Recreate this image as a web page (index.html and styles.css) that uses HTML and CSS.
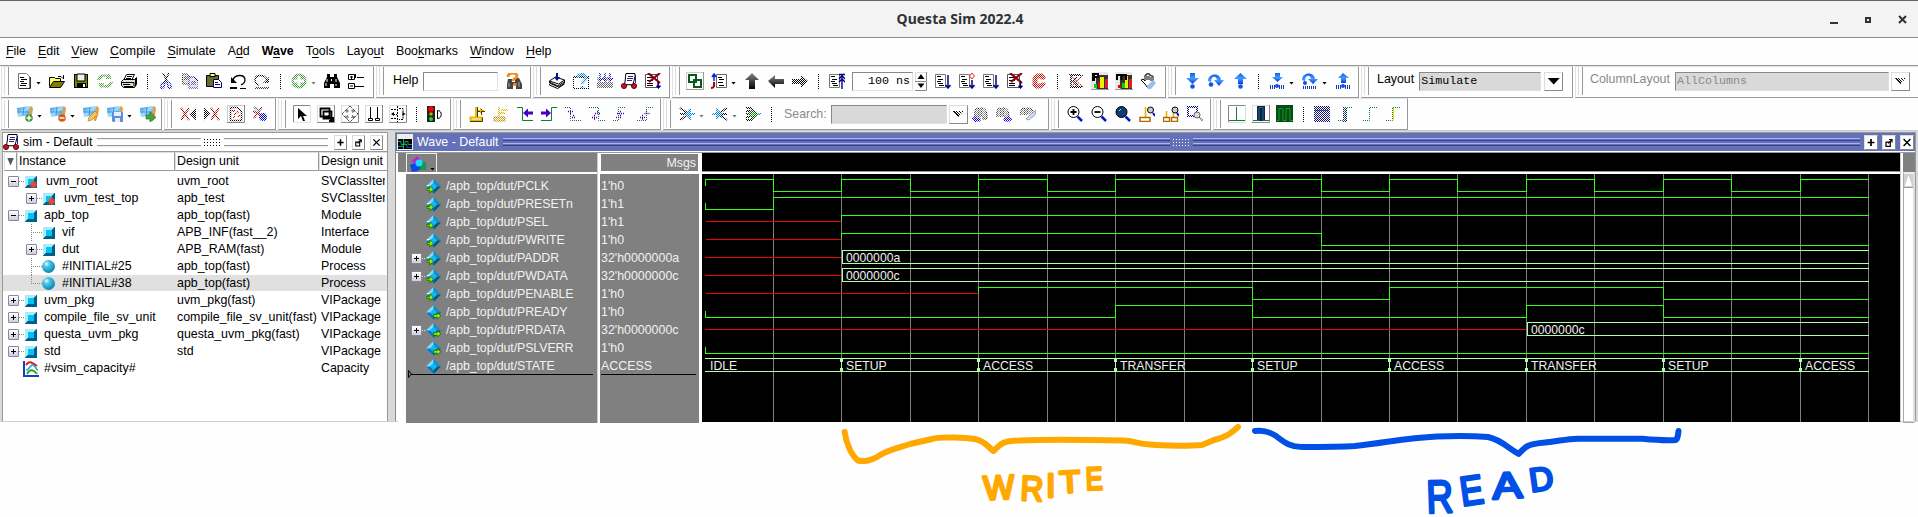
FILE: index.html
```html
<!DOCTYPE html>
<html lang="en">
<head>
<meta charset="utf-8">
<title>Questa Sim 2022.4</title>
<link rel="stylesheet" href="styles.css">
</head>
<body>
<svg class="defs" width="0" height="0" aria-hidden="true">
<defs>
<pattern id="dither" width="2" height="2" patternUnits="userSpaceOnUse"><path d="M0 0h1v1H0zM1 1h1v1H1z" fill="#fff"/></pattern>
<mask id="dm" maskUnits="userSpaceOnUse" x="-2" y="-2" width="24" height="24"><rect x="-2" y="-2" width="24" height="24" fill="url(#dither)"/></mask>
<linearGradient id="gDark" x2="0" y2="1"><stop stop-color="#888"/><stop offset="1" stop-color="#000"/></linearGradient>
<linearGradient id="gBlue" x2="0" y2="1"><stop stop-color="#1a5cf0"/><stop offset=".5" stop-color="#3c9cff"/><stop offset="1" stop-color="#0a3ad8"/></linearGradient>
<linearGradient id="gWp" x2="1" y2="1"><stop stop-color="#2a86d8"/><stop offset=".5" stop-color="#9fe0ff"/><stop offset="1" stop-color="#3a90e0"/></linearGradient>
<radialGradient id="gBall" cx=".35" cy=".3" r=".75"><stop stop-color="#e8fbff"/><stop offset=".3" stop-color="#4cc8e8"/><stop offset="1" stop-color="#0a7fa8"/></radialGradient>

<symbol id="new" viewBox="0 0 16 16"><path d="M2.500 .5h8l3 3v12h-11z" fill="#fff" stroke="#777"/><path d="M14.500 4v11.500H3" fill="none" stroke="#333"/><path d="M4 4.500h4M5 6.500h6M4 8.500h4M5 10.500h6M4 12.500h6" stroke="#000"/></symbol>
<symbol id="open" viewBox="0 0 16 16"><path d="M9 3.500h3l2 2M14.500 2v4" fill="none" stroke="#000"/><path d="M.5 13.500v-9h5l1 1h5v3" fill="#ffff60" stroke="#000"/><path d="M.5 14.500l4-6h11l-4 6z" fill="#808000" stroke="#000"/></symbol>
<symbol id="save" viewBox="0 0 16 16"><path d="M1 1h14v14H1z" fill="#000"/><path d="M2 2h12v12H2z" fill="#808000"/><path d="M4 1h8v7H4z" fill="#eee" stroke="#000"/><path d="M4 10h9v5H4z"/><path d="M10 11h2v3h-2z" fill="#fff"/></symbol>
<symbol id="reload" viewBox="0 0 16 16"><g fill="#4da838" mask="url(#dm)"><path d="M0 7C1 2 6 0 11 2l1-2 3 6H9l1-2C6 3 4 5 4 7zM16 9c-1 5-6 7-11 5l-1 2-3-6h6l-1 2c4 1 6-1 6-3z"/></g></symbol>
<symbol id="print" viewBox="0 0 16 16"><path d="M5.500 1.500h8l-3 6h-8z" fill="#fff" stroke="#000"/><path d="M6 3.500h5M5 5.500h5" stroke="#000"/><path d="M.5 8.500l2-2h11l2-2v7l-2 3h-11l-2-2z" fill="#ddd" stroke="#000"/><path d="M1 9.500h12v4M2 11.500h8M3 13.500h9M14.500 5v8" fill="none" stroke="#000"/><path d="M9 11h2v1H9z" fill="#dd0"/></symbol>
<symbol id="cut" viewBox="0 0 16 16"><g mask="url(#dm)" fill="none" stroke-width="1.600"><path d="M5 0l5 10M11 0L6 10" stroke="#000"/><path d="M7 9c-2 0-4 2-4 5s3 1 3-1zM9 9c2 0 4 2 4 5s-3 1-3-1z" stroke="#00c"/></g></symbol>
<symbol id="copy" viewBox="0 0 16 16"><g mask="url(#dm)"><path d="M0 1h6l2 3v7H1z" fill="#bbb" stroke="#000"/><path d="M7 4h5l4 4v7H7z" fill="#ccf" stroke="#008"/><path d="M2 4h4M2 6h4M9 9h5M9 11h5" stroke="#000"/></g></symbol>
<symbol id="paste" viewBox="0 0 16 16"><path d="M.5 2.500h12v11H.5z" fill="#6b6b30" stroke="#000"/><path d="M4 .5h5v3H4z" fill="#ff6" stroke="#000"/><path d="M7.500 6.500h5l3 3v5h-8z" fill="#fff" stroke="#006"/><path d="M9 9.500h3M9 11.500h5" stroke="#006"/></symbol>
<symbol id="undo" viewBox="0 0 16 16"><path d="M1 4v6h6z"/><path d="M3 7c2-6 12-6 12 0 0 3-2 4-4 5" fill="none" stroke="#000" stroke-width="1.300"/><path d="M0 14h7v2H0zM10 15h6v1h-6z"/></symbol>
<symbol id="redo" viewBox="0 0 16 16"><g mask="url(#dm)"><path d="M15 4v6H9z"/><path d="M13 7C11 1 1 1 1 7c0 3 2 4 4 5M1 15h14" fill="none" stroke="#000" stroke-width="1.400"/></g></symbol>
<symbol id="addc" viewBox="0 0 16 16"><g mask="url(#dm)"><circle cx="8" cy="8" r="7.500" fill="#3b9a2e"/><path d="M6.500 3h3v3.500H13v3H9.500V13h-3V9.500H3v-3h3.500z" fill="#fff"/></g></symbol>
<symbol id="find" viewBox="0 0 16 16"><path d="M3 1h3v3h4V1h3v3l3 6v5h-6v-4H6v4H0v-5l3-6z"/><path d="M3 6v3M2 10v3M12 6v3M12 11v2M7.500 6v2" stroke="#fff"/></symbol>
<symbol id="tree" viewBox="0 0 16 16"><path d="M.5 1.500h6v5h-6zM.5 10.500h6v5h-6zM9 4.500h7M7 13.500h9M7.500 1v4" fill="none" stroke="#000"/><path d="M2 4h3M3.500 3v3M2 13h3" stroke="#000"/></symbol>
<symbol id="hfind" viewBox="0 0 16 16"><path d="M2 6h4v3h3V5h4l3 6v5h-6v-4H7v4H1v-5z" fill="#444"/><path d="M2 4c0-5 9-5 9-1 0 3-4 2-4 5" fill="none" stroke="#f08c1e" stroke-width="2.800"/><circle cx="9" cy="11.500" r="1.800" fill="#f08c1e"/><path d="M3 10v4M13 9v5" stroke="#aaa"/></symbol>
<symbol id="compile" viewBox="0 0 16 16"><path d="M.5 8l6-4 9 3-6 4zM.5 8v2l9 4 6-4V7M.5 11v1l8 3.500 7-4.500" fill="#fff" stroke="#000"/><path d="M1 9.500l8 3.500 6-4" fill="none" stroke="#000"/><path d="M7 0h2v4h2L8 8 5 4h2z" fill="#00109a"/></symbol>
<symbol id="optq" viewBox="0 0 16 16"><g mask="url(#dm)"><path d="M0 4h16v12H0z" fill="none" stroke="#000" stroke-width="2"/><path d="M5 5c0-5 8-5 8 0 0 3-4 3-4 6M9 13v2" fill="none" stroke="#08e" stroke-width="2.800"/></g></symbol>
<symbol id="compall" viewBox="0 0 16 16"><g mask="url(#dm)"><path d="M0 9h16v6H0z" fill="#666"/><path d="M3 0v8M8 0v8M13 0v8M0 5l3 3 3-3 2 3 3-3 2 3 3-3" fill="none" stroke="#009" stroke-width="1.500"/></g></symbol>
<symbol id="sim" viewBox="0 0 16 16"><path d="M5 .5h9v3l-2 8H3c2-3 1-8 2-11z" fill="#fff" stroke="#000"/><path d="M7 3.500h5M6 5.500h6M6 7.500h5M14.500 2v8" stroke="#228"/><path d="M0 12h16" stroke="#777"/><circle cx="3" cy="13" r="2.500" fill="#d01030" stroke="#500"/><circle cx="13" cy="13" r="2.500" fill="#d01030" stroke="#500"/></symbol>
<symbol id="brk" viewBox="0 0 16 16"><path d="M.5 1.500h12v13H.5z" fill="#fff" stroke="#555"/><path d="M2 4.500h6M2 7.500h6M2 10.500h6M2 12.500h6" stroke="#000"/><path d="M3 0l12 10M15 0L4 9" stroke="#900010" stroke-width="2.200"/><path d="M13.500 9v4M11.500 13l2 2.500 2-2.500z" fill="#008" stroke="#008"/></symbol>
<symbol id="link" viewBox="0 0 18 18"><path d="M.5 .5h17v17H.5z" fill="#fff" stroke="#ccc"/><path d="M0 17.500h17.500V0" fill="none" stroke="#999"/><path d="M3 3h7v7H3zM8 8h7v7H8z" fill="none" stroke="#075a1a" stroke-width="2"/></symbol>
<symbol id="stack" viewBox="0 0 16 16"><path d="M5.500 1.500h10v13h-10z" fill="#fff" stroke="#666"/><path d="M7 4.500h4M8 6.500h5M7 9.500h5M8 12.500h5" stroke="#000"/><path d="M0 15c4 0 3-3 3-6" fill="none" stroke="#900" stroke-width="2"/><path d="M3 8V2M1 4l2-3 2 3" fill="none" stroke="#02e" stroke-width="1.500"/></symbol>
<symbol id="up" viewBox="0 0 16 16"><path d="M8 0l7 7h-4v9H5V7H1z" fill="url(#gDark)"/></symbol>
<symbol id="left" viewBox="0 0 16 16"><path d="M0 8l7-6v4h9v5H7v4z" fill="url(#gDark)"/></symbol>
<symbol id="right" viewBox="0 0 16 16"><path d="M16 8L9 2v4H0v5h9v4z" mask="url(#dm)"/></symbol>
<symbol id="doc" viewBox="0 0 16 16"><path d="M.5 1.500h10v13H.5z" fill="#fff" stroke="#777"/><path d="M2 3.500h4M3 6.500h5M2 8.500h4M3 10.500h5M4 12.500h5" stroke="#000"/></symbol>
<symbol id="restart" viewBox="0 0 16 16"><use href="#doc"/><path d="M10 1.500h6M13 2v14M10 6l3-3.500L16 6M10 9l3-3 3 3" stroke="#008" fill="none" stroke-width="1.400"/></symbol>
<symbol id="run" viewBox="0 0 16 16"><use href="#doc"/><path d="M13 2v13M10.500 12l2.500 3 2.500-3" stroke="#008" fill="none" stroke-width="1.500"/></symbol>
<symbol id="runc" viewBox="0 0 16 16"><use href="#doc"/><path d="M13 7v8M10.500 12l2.500 3 2.500-3" stroke="#008" fill="none" stroke-width="1.500"/><path d="M13 0l2.500 3L13 6l-2.500-3z" fill="#fff" stroke="#e22"/></symbol>
<symbol id="stop" viewBox="0 0 16 16"><path d="M5 1h7l2 3v2h-4V5H6v6h4v-1h4v2l-3 3H5l-3-3V4z" fill="#e01000" stroke="#e01000" mask="url(#dm)"/></symbol>
<symbol id="kx" viewBox="0 0 16 16"><g mask="url(#dm)"><path d="M3 2v12h11M3 2h10M9 4L5 8l5 5" fill="none" stroke="#000" stroke-width="1.800"/></g><path d="M1 1l14 13M15 2L3 14" stroke="#a00000" stroke-dasharray="2 1"/></symbol>
<symbol id="prof" viewBox="0 0 18 18"><path d="M0 0h17v17H0z" fill="#e8e8e8"/><path d="M5 16V3h12v14H6z" fill="#333"/><path d="M3 12h3v4H3z" fill="#0d0"/><path d="M7 10h3v6H7z" fill="#e00"/><path d="M9 5h4v11H9z" fill="#ee0"/><path d="M14 7h3v9h-3z" fill="#e02020"/><path d="M1 1h7v5H4v3H1z" fill="#000"/><path d="M4 3h2v1H4z" fill="#fff"/><path d="M0 17.500h18" stroke="#999"/></symbol>
<symbol id="mem" viewBox="0 0 18 18"><path d="M0 0h17v17H0z" fill="#e8e8e8"/><path d="M5 16V3h12v14H6z" fill="#333"/><path d="M3 13h3v3H3z" fill="#e00"/><path d="M7 11h3v5H7z" fill="#0d0"/><path d="M10 4h3v12h-3z" fill="#ee0"/><path d="M14 7h3v9h-3z" fill="#e02020"/><path d="M2 8V3h9v5M6.500 3v5" fill="none" stroke="#000" stroke-width="2"/><path d="M0 17.500h18" stroke="#999"/></symbol>
<symbol id="hand" viewBox="0 0 16 16"><path d="M5 11L1 7l2-1 2 2V2h2V0h2v2h2v1h2v8l-3 3H7z" fill="#fff" stroke="#000"/><path d="M7 3v4M9 3v4M11 4v4" stroke="#000"/><path d="M7 13l6-6 3 3-5 6H8z" fill="#9bbcf0"/></symbol>
<symbol id="sinto" viewBox="0 0 16 16"><path d="M6 0h5v5h4l-6.500 6L2 5h4z" fill="url(#gBlue)"/><circle cx="8.500" cy="13.500" r="2.300" fill="#1450e8"/></symbol>
<symbol id="sover" viewBox="0 0 16 16"><path d="M0 8C0 0 12-1 13 7h3l-5 6-5-6h3C8 2 3 3 3 9z" fill="url(#gBlue)"/><circle cx="3" cy="11.500" r="2.300" fill="#1450e8"/></symbol>
<symbol id="sout" viewBox="0 0 16 16"><path d="M8.500 0L15 6h-4v5H6V6H2z" fill="url(#gBlue)"/><circle cx="8.500" cy="13.500" r="2.300" fill="#1450e8"/></symbol>
<symbol id="ticks" viewBox="0 0 16 16"><path d="M1.500 12v4M3.500 12v4M5.500 12v4M10.500 12v4M12.500 12v4M14.500 12v4" stroke="#1438c0"/></symbol>
<symbol id="sinto2" viewBox="0 0 16 16"><path d="M6 0h5v4h3l-5.500 5L3 4h3z" fill="url(#gBlue)"/><circle cx="8" cy="13" r="2" fill="#1450e8"/><use href="#ticks"/></symbol>
<symbol id="sover2" viewBox="0 0 16 16"><path d="M0 7C0-1 12-2 13 6h3l-5 5-5-5h3C8 1 3 2 3 8z" fill="url(#gBlue)"/><circle cx="3" cy="10" r="2" fill="#1450e8"/><path d="M1.500 13v3M3.500 13v3M5.500 13v3M7.500 13v3M9.500 13v3M11.500 13v3M13.500 13v3" stroke="#1438c0"/></symbol>
<symbol id="sout2" viewBox="0 0 16 16"><path d="M8 0l6 5h-3v5H6V5H3z" fill="url(#gBlue)"/><circle cx="8" cy="13" r="2" fill="#1450e8"/><use href="#ticks"/></symbol>

<symbol id="flag" viewBox="0 0 16 16"><path d="M12 1c2-2 4 0 4 2l-1 6-2 6h-2z" fill="#d9a050"/><path d="M0 2l7-1 5-1 1 1-1 8-5 1-6 1z" fill="url(#gWp)"/><path d="M7 1L6 9M0 6h12" stroke="#2878c8" stroke-width=".7"/></symbol>
<symbol id="fadd" viewBox="0 0 16 16"><use href="#flag"/><circle cx="12" cy="12" r="3.800" fill="#3d9a35"/><path d="M12 9.500v5M9.500 12h5" stroke="#fff" stroke-width="1.500"/></symbol>
<symbol id="fdel" viewBox="0 0 16 16"><use href="#flag"/><circle cx="12" cy="12" r="3.800" fill="#e05818"/><path d="M9.500 12h5" stroke="#fff" stroke-width="1.500"/></symbol>
<symbol id="fedit" viewBox="0 0 16 16"><use href="#flag"/><path d="M5 15l1-4 6-6 3 3-6 6z" fill="#f5c25c" stroke="#c87820" stroke-width=".7"/></symbol>
<symbol id="fsave" viewBox="0 0 16 16"><use href="#flag"/><path d="M5 6h11v10H6l-1-1z" fill="#5e8ed8"/><path d="M7 6h7v4H7zM8 12h5v4H8z" fill="#e8f0ff"/></symbol>
<symbol id="fgo" viewBox="0 0 16 16"><use href="#flag"/><path d="M6 9h4V6l6 5.500L10 16v-3H6z" fill="#4aa33c" stroke="#2a7a20" stroke-width=".7"/></symbol>
<symbol id="xprev" viewBox="0 0 16 16"><g mask="url(#dm)" fill="none" stroke-width="2"><path d="M1 2l8 12M9 2L1 14" stroke="#a00"/><path d="M15 4l-4 4 4 4z" stroke="#000" fill="#000"/></g></symbol>
<symbol id="xnext" viewBox="0 0 16 16"><g mask="url(#dm)" fill="none" stroke-width="2"><path d="M7 2l8 12M15 2L7 14" stroke="#a00"/><path d="M1 4l4 4-4 4z" stroke="#000" fill="#000"/></g></symbol>
<symbol id="xbox" viewBox="0 0 18 18"><path d="M.5 17.500V.5h17" fill="none" stroke="#ccc"/><path d="M0 17.500h17.500V0" fill="none" stroke="#888"/><g mask="url(#dm)"><path d="M3.500 2.500h7l4 4v9h-11z" fill="none" stroke="#000" stroke-width="1.500"/><path d="M5 6h3M7 9h2M10 6l1 2M6 12h2M11 11h2" stroke="#c00" stroke-width="2"/></g></symbol>
<symbol id="xslash" viewBox="0 0 16 16"><g mask="url(#dm)"><path d="M1 5l10 5M10 1L2 12" stroke="#a00" stroke-width="2"/><path d="M2 1l5 4" stroke="#088" stroke-width="2"/><circle cx="11" cy="11" r="4" fill="#00c"/></g></symbol>
<symbol id="btn" viewBox="0 0 18 18"><path d="M.5 17V.5h17" fill="none" stroke="#ddd"/><path d="M0 17.500h17.500V0" fill="none" stroke="#888"/></symbol>
<symbol id="ptr" viewBox="0 0 18 18"><path d="M.5 17V.5h17" fill="none" stroke="#888"/><path d="M0 17.500h17.500V0" fill="none" stroke="#e4e4e4"/><path d="M5 3v11l3-3 2 5h2l-2-5h4z"/></symbol>
<symbol id="zoomm" viewBox="0 0 18 18"><use href="#btn"/><path d="M3.500 3.500h9v8h-9zM6.500 6.500h8v7h-8z" fill="none" stroke="#000" stroke-width="1.800"/><path d="M11 11l5 5m0-4v4h-4" stroke="#000" stroke-width="2" fill="none"/></symbol>
<symbol id="pan" viewBox="0 0 18 18"><use href="#btn"/><path d="M9 1l4 4h-2v2h2V5l4 4-4 4v-2h-2v2h2l-4 4-4-4h2v-2H5v2L1 9l4-4v2h2V5H5z" fill="none" stroke="#000" stroke-dasharray="1 1"/></symbol>
<symbol id="two" viewBox="0 0 18 18"><use href="#btn"/><path d="M5.500 2v11M12.500 2v11" stroke="#000"/><path d="M3.500 13.500h4v2h-4zM10.500 13.500h4v2h-4z" fill="#fff" stroke="#000"/></symbol>
<symbol id="edit" viewBox="0 0 18 18"><use href="#btn"/><path d="M8.500 1v16" stroke="#000" stroke-dasharray="2 1"/><path d="M2 4.500h5M4 9.500h4M2 13.500h5M10 3.500h4v11h-4" fill="none" stroke="#000" stroke-dasharray="2 1"/><path d="M2 9l3-2v4zM16.500 9l-3-2v4z"/></symbol>
<symbol id="light" viewBox="0 0 16 16"><path d="M0 0h8v16H0z" fill="#222"/><circle cx="4" cy="3" r="2.700" fill="#f00"/><circle cx="4" cy="8" r="1.800" fill="#bba800"/><circle cx="4" cy="13" r="2" fill="#1d4"/><path d="M10.500 4.500c5 0 5 8 0 8z" fill="none" stroke="#000"/></symbol>
<symbol id="curadd" viewBox="0 0 16 16"><path d="M7 1v10M1.500 11.500h11v3h-11z" fill="none" stroke="#e8b800" stroke-width="2"/><path d="M8.500 1v10M1 15.500h12.500v-4M9 5.500h7M12.500 3v6" fill="none" stroke="#4a3800"/><path d="M9 4.500h6M11.500 2v5" stroke="#e8b800"/></symbol>
<symbol id="curdel" viewBox="0 0 16 16"><g mask="url(#dm)"><path d="M6 1v9M8 4h7M6 7h6" stroke="#e8b800" stroke-width="2"/><path d="M1 11h11v4H1z" fill="#e8b800" stroke="#8a6a00"/></g></symbol>
<symbol id="tprev" viewBox="0 0 16 16"><path d="M0 1.500h5.500v13H16" fill="none" stroke="#0a8035"/><path d="M6 7l5-4.500v3h5v3h-5v3z" fill="#4600c8"/></symbol>
<symbol id="tnext" viewBox="0 0 16 16"><path d="M0 14.500h10.500v-13H16" fill="none" stroke="#0a8035"/><path d="M10 7L5 2.500v3H0v3h5v3z" fill="#4600c8"/></symbol>
<symbol id="tfall" viewBox="0 0 16 16"><path d="M0 1.500h5.500v13H16" fill="none" stroke="#0a8035" stroke-dasharray="1 1"/><path d="M3 5.500h5M5 7.500h2M8 9.500h2M7 11.500h4" fill="none" stroke="#4600c8" stroke-width="1.500" stroke-dasharray="1 1"/></symbol>
<symbol id="trise" viewBox="0 0 16 16"><path d="M0 14.500h9.500v-13H16" fill="none" stroke="#0a8035" stroke-dasharray="1 1"/><path d="M3 11.500h6M5 9.500h2M5 13h2M7.500 7.500h5M9 5.500h2" fill="none" stroke="#4600c8" stroke-width="1.500" stroke-dasharray="1 1"/></symbol>
<symbol id="trise2" viewBox="0 0 16 16"><path d="M0 14.500h5.500v-13H12" fill="none" stroke="#0a8035" stroke-dasharray="1 1"/><path d="M4 7.500h7M7 5.500h2M7 9.500h2M3 11.500h5" fill="none" stroke="#4600c8" stroke-width="1.500" stroke-dasharray="1 1"/></symbol>
<symbol id="tfall2" viewBox="0 0 16 16"><path d="M0 1.500h9.500v13H16" fill="none" stroke="#0a8035" stroke-dasharray="1 1"/><path d="M6 7.500h6M8 5.500h2M3 11.500h6M5 9.500h2M5 13h2" fill="none" stroke="#4600c8" stroke-width="1.500" stroke-dasharray="1 1"/></symbol>
<symbol id="c1" viewBox="0 0 16 16"><g mask="url(#dm)" fill="none" stroke-width="2"><path d="M1 2l6 4v4l-6 4M1 8h5" stroke="#000"/><path d="M7 8l4-4v8zM10 8h6" stroke="#08e" fill="#08e"/></g></symbol>
<symbol id="c2" viewBox="0 0 16 16"><g mask="url(#dm)" fill="none" stroke-width="2"><path d="M15 2L9 6v4l6 4M15 8h-5" stroke="#000"/><path d="M9 8L5 4v8zM6 8H0" stroke="#08e" fill="#08e"/></g></symbol>
<symbol id="c3" viewBox="0 0 16 16"><g mask="url(#dm)" fill="none" stroke-width="2"><path d="M1 2h5l5 6-5 6H1M1 5h4M1 11h4M1 8h4" stroke="#000"/><path d="M8 4l4 4-4 4-4-4z" fill="#0a0" stroke="#050"/><path d="M13 8h3" stroke="#08e"/></g></symbol>
<symbol id="sprev" viewBox="0 0 16 16"><g mask="url(#dm)"><path d="M3 11C2 4 4 2 7 2v9M9 11V2c4 0 6 2 6 11h-4v-3" fill="#999" stroke="#000"/><path d="M0 13l4-3v2h4v3H4v1z" fill="#00e" stroke="#00e"/></g></symbol>
<symbol id="snext" viewBox="0 0 16 16"><g mask="url(#dm)"><path d="M1 11C0 4 2 2 5 2v9M7 11V2c4 0 6 2 6 11H9v-3" fill="#999" stroke="#000"/><path d="M16 13l-4-3v2H8v3h4v1z" fill="#00e" stroke="#00e"/></g></symbol>
<symbol id="sopt" viewBox="0 0 16 16"><g mask="url(#dm)"><path d="M1 9C0 4 2 2 5 2v7M7 9V2c4 0 6 2 6 5" fill="#999" stroke="#000"/></g><path d="M6 13l6-6 4-3-1 5-6 5z" fill="#cfdcf0" stroke="#889" stroke-width=".7"/></symbol>
<symbol id="zin" viewBox="0 0 16 16"><circle cx="6.500" cy="6" r="5.500" fill="#fff" stroke="#000"/><path d="M6.500 3v6M3.500 6h6" stroke="#000" stroke-width="1.800"/><path d="M10.500 10.500l4.500 4.500" stroke="#0018c0" stroke-width="2.500"/></symbol>
<symbol id="zout" viewBox="0 0 16 16"><circle cx="6.500" cy="6" r="5.500" fill="#fff" stroke="#000"/><path d="M3.500 6h6" stroke="#000" stroke-width="1.800"/><path d="M10.500 10.500l4.500 4.500" stroke="#0018c0" stroke-width="2.500"/></symbol>
<symbol id="zfull" viewBox="0 0 16 16"><circle cx="6.500" cy="6" r="5.500" fill="#0c3c70" stroke="#000"/><path d="M4 5l2-2" stroke="#acf"/><path d="M10.500 10.500l4.500 4.500" stroke="#0018c0" stroke-width="2.500"/></symbol>
<symbol id="zcur" viewBox="0 0 16 16"><path d="M6.500 1v10" stroke="#e8b400" stroke-width="1.600"/><path d="M1 11.500h10v4H1z" fill="#fff" stroke="#b06a00" stroke-width="1.500"/><circle cx="11.500" cy="4" r="3" fill="#ccc" stroke="#000"/><path d="M14 7l2 3" stroke="#00c" stroke-width="2"/></symbol>
<symbol id="ztwo" viewBox="0 0 16 16"><path d="M3.500 5v6M10.500 1v10" stroke="#e8b400" stroke-width="1.600"/><path d="M.5 11.500h6v4h-6zM8.500 11.500h6v4h-6z" fill="#fff" stroke="#b06a00" stroke-width="1.400"/><circle cx="12" cy="4" r="3" fill="#ccc" stroke="#000"/><path d="M14 7l2 3" stroke="#00c" stroke-width="2"/></symbol>
<symbol id="zsel" viewBox="0 0 16 16"><g mask="url(#dm)"><path d="M1 1h9v9H1z" fill="none" stroke="#009" stroke-width="2"/></g><circle cx="10" cy="9" r="3" fill="#ddd" stroke="#667"/><path d="M12 11l4 4" stroke="#556" stroke-width="2" stroke-dasharray="1 1"/></symbol>
<symbol id="w1" viewBox="0 0 18 18"><path d="M.5 17V.5h17" fill="none" stroke="#888"/><path d="M0 17.500h17.500V0" fill="none" stroke="#ddd"/><path d="M1 15.500h16M8.500 2v14" stroke="#0a8035"/></symbol>
<symbol id="w2" viewBox="0 0 18 18"><use href="#btn"/><path d="M5 1h8v15H5z" fill="#181868"/><path d="M1 15.500h6v-13h4v13h6" fill="none" stroke="#0a8035"/></symbol>
<symbol id="w3" viewBox="0 0 18 18"><path d="M0 0h17v17H0z" fill="#044c10"/><path d="M1 15.500h2v-12h4v12h3v-12h4v12h3" fill="none" stroke="#129a30"/></symbol>
<symbol id="w4" viewBox="0 0 16 16"><path d="M0 0h16v16H0z" fill="#117" mask="url(#dm)"/><path d="M1 4.500h14" stroke="#586" stroke-dasharray="1 1"/></symbol>
<symbol id="w5" viewBox="0 0 16 16"><path d="M5 1h4v15H5z" fill="#117" mask="url(#dm)"/><path d="M0 14.500h6.500v-13H15" fill="none" stroke="#0a8035" stroke-dasharray="1 1"/></symbol>
<symbol id="w6" viewBox="0 0 16 16"><path d="M1 14.500h6.500v-13H15" fill="none" stroke="#0a8035" stroke-dasharray="1 1"/></symbol>
<symbol id="w7" viewBox="0 0 16 16"><path d="M7.500 2v12" stroke="#dd0"/><path d="M0 14.500h6.500v-13H15" fill="none" stroke="#0a8035" stroke-dasharray="1 1"/></symbol>

<symbol id="cube" viewBox="0 0 12 12"><path d="M0 0h12L9 3H3v6l-3 3z" fill="#a8ecfc"/><path d="M12 0v12H0l3-3h6V3z" fill="#005f88"/><path d="M12 0L0 12" stroke="#033" stroke-width=".5"/><path d="M3 3h6v6H3z" fill="#00c4f4"/></symbol>
<symbol id="cubex" viewBox="0 0 12 12"><use href="#cube"/><path d="M8.500 4.500v7.500M4.500 8.500H12M6 6l5 5M11 6l-5 5" stroke="#f04830" stroke-width="1.500"/></symbol>
<symbol id="ball" viewBox="0 0 13 13"><circle cx="6.500" cy="6.500" r="6.500" fill="url(#gBall)"/></symbol>
<symbol id="cap" viewBox="0 0 16 16"><path d="M0 0h2v14h14v2H0z" fill="#1540c0"/><path d="M3 4c3-5 7-2 11 1" fill="none" stroke="#e81818" stroke-width="2"/><path d="M3 9c4 0 4-6 7-5s3 5 5 5" fill="none" stroke="#18a8e0" stroke-width="1.500"/><path d="M4 13c3-6 7-4 10 0" fill="none" stroke="#2aa820" stroke-width="2"/></symbol>
<symbol id="dia" viewBox="0 0 16 16"><path d="M8 0v16L0 8z" fill="#7fdcf8"/><path d="M8 0l8 8H8z" fill="#0d8fd0"/><path d="M0 8h8v8z" fill="#0878c0"/><path d="M16 8l-8 8V8z" fill="#00587c"/><path d="M8 4l4 4-4 4-4-4z" fill="#12b6f6"/></symbol>
<symbol id="din" viewBox="0 0 16 16"><use href="#dia"/><path d="M1 10h3V7l4 4-4 4v-3H1z" fill="#8cf000" stroke="#1f6a00" stroke-width=".9"/><path d="M1 7h3" stroke="#fff"/></symbol>
<symbol id="dout" viewBox="0 0 16 16"><use href="#dia"/><path d="M8 10h4V8l4 3.500-4 3.500v-2H8z" fill="#8cf000" stroke="#1f6a00" stroke-width=".9"/></symbol>
<symbol id="wave" viewBox="0 0 16 16"><path d="M0 0h16v16H0z" fill="#eee"/><path d="M1 5h14v10H1z" fill="#000"/><path d="M1 7.500h3v3h4v-3h3v3h4M1 12.500h5v-2h4v2" fill="none" stroke="#19a040"/><path d="M6.500 5v10" stroke="#0aa"/><path d="M9 13.500h6" stroke="#22f"/></symbol>
<symbol id="shapes" viewBox="0 0 16 16"><path d="M1 6l6-6 4 5-5 2z" fill="#c81cd0"/><path d="M9 6h7v8H9z" fill="#159a48"/><path d="M0 9l7-3 4 5-3 4-6 1z" fill="#0848e8"/><circle cx="9" cy="7" r="3.500" fill="#18dcff"/></symbol>
<symbol id="bplus" viewBox="0 0 14 14"><path d="M7 3v8M3 7h8" stroke="#000" stroke-width="2"/></symbol>
<symbol id="bout" viewBox="0 0 14 14"><path d="M3.500 6.500h5v5h-5zM6 8l4.500-4.500M7 3.500h3.500V7" fill="none" stroke="#000" stroke-width="1.400"/></symbol>
<symbol id="bx" viewBox="0 0 14 14"><path d="M3 3l8 8M11 3l-8 8" stroke="#000" stroke-width="1.700"/></symbol>
</defs>
</svg>

<header class="titlebar">
  <h1>Questa Sim 2022.4</h1>
  <svg class="winbtns" viewBox="0 0 78 12"><path d="M0 9h8v2H0z" fill="#2e3436"/><path d="M36 5h4v4h-4z" fill="none" stroke="#2e3436" stroke-width="2"/><path d="M69 3l7 7M76 3l-7 7" stroke="#2e3436" stroke-width="2"/></svg>
</header>
<nav class="menu"><span><u>F</u>ile</span><span><u>E</u>dit</span><span><u>V</u>iew</span><span><u>C</u>ompile</span><span><u>S</u>imulate</span><span>A<u>d</u>d</span><b>W<u>a</u>ve</b><span>T<u>o</u>ols</span><span>Layo<u>u</u>t</span><span>Boo<u>k</u>marks</span><span><u>W</u>indow</span><span><u>H</u>elp</span></nav>

<div class="toolrow first">
  <div class="group g-std">
    <svg class="ic"><use href="#new"/></svg><i class="dd"></i><svg class="ic"><use href="#open"/></svg><svg class="ic"><use href="#save"/></svg><svg class="ic"><use href="#reload"/></svg><svg class="ic"><use href="#print"/></svg><i class="sep"></i><svg class="ic"><use href="#cut"/></svg><svg class="ic"><use href="#copy"/></svg><svg class="ic"><use href="#paste"/></svg><svg class="ic"><use href="#undo"/></svg><svg class="ic"><use href="#redo"/></svg><i class="sep"></i><svg class="ic"><use href="#addc"/></svg><i class="dd off"></i><svg class="ic"><use href="#find"/></svg><svg class="ic"><use href="#tree"/></svg>
  </div>
  <div class="group g-help"><label>Help</label><span class="field"></span><svg class="ic"><use href="#hfind"/></svg></div>
  <div class="group g-comp"><svg class="ic"><use href="#compile"/></svg><svg class="ic"><use href="#optq"/></svg><svg class="ic"><use href="#compall"/></svg><svg class="ic"><use href="#sim"/></svg><svg class="ic"><use href="#brk"/></svg></div>
  <div class="group g-sim">
    <svg class="ic b"><use href="#link"/></svg><svg class="ic"><use href="#stack"/></svg><i class="dd"></i><svg class="ic"><use href="#up"/></svg><svg class="ic"><use href="#left"/></svg><svg class="ic"><use href="#right"/></svg><i class="sep"></i><svg class="ic"><use href="#restart"/></svg><span class="field time">100 ns</span><svg class="spin" viewBox="0 0 12 19"><path d="M.5 9V.5h11" fill="none" stroke="#ddd"/><path d="M0 9.500h11.500V0M0 18.500h11.500V10" fill="none" stroke="#888"/><path d="M6 2l3.500 5h-7zM6 16l3.500-4.500h-7z"/></svg><svg class="ic"><use href="#run"/></svg><svg class="ic"><use href="#runc"/></svg><svg class="ic"><use href="#run"/></svg><svg class="ic"><use href="#brk"/></svg><svg class="ic"><use href="#stop"/></svg><i class="sep"></i><svg class="ic"><use href="#kx"/></svg><svg class="ic b"><use href="#prof"/></svg><svg class="ic b"><use href="#mem"/></svg><svg class="ic"><use href="#hand"/></svg>
  </div>
  <div class="group g-step"><svg class="ic"><use href="#sinto"/></svg><svg class="ic"><use href="#sover"/></svg><svg class="ic"><use href="#sout"/></svg><i class="sep"></i><svg class="ic"><use href="#sinto2"/></svg><i class="dd"></i><svg class="ic"><use href="#sover2"/></svg><i class="dd"></i><svg class="ic"><use href="#sout2"/></svg></div>
  <div class="group g-layout"><label>Layout</label><span class="field combo">Simulate</span><span class="arrow"><i></i></span></div>
  <div class="group g-cols"><label>ColumnLayout</label><span class="field combo">AllColumns</span><span class="arrow off"><i></i></span></div>
</div>
<div class="toolrow">
  <div class="group h-flag"><svg class="ic"><use href="#fadd"/></svg><i class="dd"></i><svg class="ic"><use href="#fdel"/></svg><i class="dd"></i><svg class="ic"><use href="#fedit"/></svg><svg class="ic"><use href="#fsave"/></svg><i class="dd"></i><svg class="ic"><use href="#fgo"/></svg></div>
  <div class="group h-x"><svg class="ic"><use href="#xprev"/></svg><svg class="ic"><use href="#xnext"/></svg><svg class="ic b"><use href="#xbox"/></svg><svg class="ic"><use href="#xslash"/></svg></div>
  <div class="group h-mode"><svg class="ic b"><use href="#ptr"/></svg><svg class="ic b"><use href="#zoomm"/></svg><svg class="ic b"><use href="#pan"/></svg><svg class="ic b"><use href="#two"/></svg><svg class="ic b"><use href="#edit"/></svg><i class="sep"></i><svg class="ic"><use href="#light"/></svg></div>
  <div class="group h-cur"><svg class="ic"><use href="#curadd"/></svg><svg class="ic"><use href="#curdel"/></svg><svg class="ic"><use href="#tprev"/></svg><svg class="ic"><use href="#tnext"/></svg><svg class="ic"><use href="#tfall"/></svg><svg class="ic"><use href="#tfall2"/></svg><svg class="ic"><use href="#trise2"/></svg><svg class="ic"><use href="#trise"/></svg></div>
  <div class="group h-search"><svg class="ic"><use href="#c1"/></svg><i class="dd off"></i><svg class="ic"><use href="#c2"/></svg><i class="dd off"></i><svg class="ic"><use href="#c3"/></svg><i class="sep"></i><label>Search:</label><span class="field combo"></span><span class="arrow off"><i></i></span><svg class="ic"><use href="#sprev"/></svg><svg class="ic"><use href="#snext"/></svg><svg class="ic"><use href="#sopt"/></svg></div>
  <div class="group h-zoom"><svg class="ic"><use href="#zin"/></svg><svg class="ic"><use href="#zout"/></svg><svg class="ic"><use href="#zfull"/></svg><svg class="ic"><use href="#zcur"/></svg><svg class="ic"><use href="#ztwo"/></svg><svg class="ic"><use href="#zsel"/></svg></div>
  <div class="group h-wave"><svg class="ic b"><use href="#w1"/></svg><svg class="ic b"><use href="#w2"/></svg><svg class="ic b"><use href="#w3"/></svg><i class="sep"></i><svg class="ic"><use href="#w4"/></svg><svg class="ic"><use href="#w5"/></svg><svg class="ic"><use href="#w6"/></svg><svg class="ic"><use href="#w7"/></svg></div>
</div>

<main class="work">
  <section class="sim">
    <div class="ptitle"><svg class="pic"><use href="#sim"/></svg><span class="pname">sim - Default</span><i class="groove"></i><i class="dots"></i><i class="groove"></i><svg class="pb"><use href="#bplus"/></svg><svg class="pb"><use href="#bout"/></svg><svg class="pb"><use href="#bx"/></svg></div>
    <div class="cols"><span class="sort"><i></i></span><span>Instance</span><span>Design unit</span><span>Design unit</span></div>
    <div class="tree">
      <div class="row"><div class="inst"><i class="ex minus"></i><i class="ln"></i><svg class="ti"><use href="#cubex"/></svg><span class="far">uvm_root</span></div><span>uvm_root</span><span>SVClassItem</span></div>
      <div class="row kid"><div class="inst"><i class="ex"></i><i class="ln"></i><svg class="ti"><use href="#cubex"/></svg><span class="far">uvm_test_top</span></div><span>apb_test</span><span>SVClassItem</span></div>
      <div class="row"><div class="inst"><i class="ex minus"></i><i class="ln"></i><svg class="ti"><use href="#cube"/></svg><span>apb_top</span></div><span>apb_top(fast)</span><span>Module</span></div>
      <div class="row leaf"><div class="inst"><i class="ln"></i><svg class="ti"><use href="#cube"/></svg><span>vif</span></div><span>APB_INF(fast__2)</span><span>Interface</span></div>
      <div class="row kid"><div class="inst"><i class="ex"></i><i class="ln"></i><svg class="ti"><use href="#cube"/></svg><span>dut</span></div><span>APB_RAM(fast)</span><span>Module</span></div>
      <div class="row leaf"><div class="inst"><i class="ln"></i><svg class="ti ball"><use href="#ball"/></svg><span>#INITIAL#25</span></div><span>apb_top(fast)</span><span>Process</span></div>
      <div class="row leaf last sel"><div class="inst"><i class="ln"></i><svg class="ti ball"><use href="#ball"/></svg><span>#INITIAL#38</span></div><span>apb_top(fast)</span><span>Process</span></div>
      <div class="row"><div class="inst"><i class="ex"></i><i class="ln"></i><svg class="ti"><use href="#cube"/></svg><span>uvm_pkg</span></div><span>uvm_pkg(fast)</span><span>VIPackage</span></div>
      <div class="row"><div class="inst"><i class="ex"></i><i class="ln"></i><svg class="ti"><use href="#cube"/></svg><span>compile_file_sv_unit</span></div><span>compile_file_sv_unit(fast)</span><span>VIPackage</span></div>
      <div class="row"><div class="inst"><i class="ex"></i><i class="ln"></i><svg class="ti"><use href="#cube"/></svg><span>questa_uvm_pkg</span></div><span>questa_uvm_pkg(fast)</span><span>VIPackage</span></div>
      <div class="row"><div class="inst"><i class="ex"></i><i class="ln"></i><svg class="ti"><use href="#cube"/></svg><span>std</span></div><span>std</span><span>VIPackage</span></div>
      <div class="row"><div class="inst capa"><svg class="pic"><use href="#cap"/></svg><span>#vsim_capacity#</span></div><span></span><span>Capacity</span></div>
    </div>
  </section>
  <div class="sash"></div>
  <section class="wavewin">
    <div class="ptitle"><svg class="pic"><use href="#wave"/></svg><span class="pname">Wave - Default</span><i class="groove"></i><i class="dots"></i><i class="groove"></i><svg class="pb"><use href="#bplus"/></svg><svg class="pb"><use href="#bout"/></svg><svg class="pb"><use href="#bx"/></svg></div>
    <div class="panes">
      <div class="names">
        <div class="nhead"><span class="shp"><svg class="pic"><use href="#shapes"/></svg><i class="dd"></i></span></div>
        <div class="nbody">
          <div class="sig"><svg class="di"><use href="#din"/></svg>/apb_top/dut/PCLK</div>
          <div class="sig"><svg class="di"><use href="#din"/></svg>/apb_top/dut/PRESETn</div>
          <div class="sig"><svg class="di"><use href="#din"/></svg>/apb_top/dut/PSEL</div>
          <div class="sig"><svg class="di"><use href="#din"/></svg>/apb_top/dut/PWRITE</div>
          <div class="sig bus"><i class="ex"></i><i class="ln"></i><svg class="di"><use href="#din"/></svg>/apb_top/dut/PADDR</div>
          <div class="sig bus"><i class="ex"></i><i class="ln"></i><svg class="di"><use href="#din"/></svg>/apb_top/dut/PWDATA</div>
          <div class="sig"><svg class="di"><use href="#din"/></svg>/apb_top/dut/PENABLE</div>
          <div class="sig"><svg class="di"><use href="#dout"/></svg>/apb_top/dut/PREADY</div>
          <div class="sig bus"><i class="ex"></i><i class="ln"></i><svg class="di"><use href="#dout"/></svg>/apb_top/dut/PRDATA</div>
          <div class="sig"><svg class="di"><use href="#dout"/></svg>/apb_top/dut/PSLVERR</div>
          <div class="sig"><svg class="di"><use href="#dia"/></svg>/apb_top/dut/STATE</div>
          <svg class="ins" viewBox="0 0 187 8"><path d="M.5 .5l3 3.500-3 3.500z" fill="none" stroke="#000"/><path d="M3 4.500h182" stroke="#000"/></svg>
        </div>
      </div>
      <div class="msgs">
        <div class="mhead">Msgs</div>
        <div class="mbody"><div>1'h0</div><div>1'h1</div><div>1'h1</div><div>1'h0</div><div>32'h0000000a</div><div>32'h0000000c</div><div>1'h0</div><div>1'h0</div><div>32'h0000000c</div><div>1'h0</div><div>ACCESS</div><hr></div>
      </div>
      <svg class="canvas" viewBox="702 153 1198 269">
        <path d="M702 153h1198v269H702z"/>
        <path d="M702 171.500h1198" stroke="#999"/><path d="M702 173h1198" stroke="#fff" stroke-width="2"/>
        <path class="grid" d="M773.500 174v248M841.500 174v248M910.500 174v248M978.500 174v248M1047.500 174v248M1115.500 174v248M1184.500 174v248M1252.500 174v248M1321.500 174v248M1389.500 174v248M1457.500 174v248M1526.500 174v248M1594.500 174v248M1663.500 174v248M1731.500 174v248M1800.500 174v248M1868.500 174v248"/>
        <g class="hi">
          <path d="M705.500 186v-6.500h68v12h68v-12h69v12h68v-12h69v12h68v-12h69v12h68v-12h69v12h68v-12h68v12h69v-12h68v12h69v-12h68v12h69v-12h68.500"/>
          <path d="M705.500 203v6.500h68v-12h1095.500"/>
          <path d="M841.500 221v-5.500h1027.500"/>
          <path d="M841.500 239v-5.500h480v12h547.500"/>
          <path d="M978.500 293v-5.500h274v12h137v-12h274v12h205.500"/>
          <path d="M705.500 311v6.500h410v-12h137v12h274v-12h137v12h205.500"/>
          <path d="M705.500 347v6.500h1163.500"/>
        </g>
        <path class="unk" d="M706 221.500h135M706 239.500h135M705 257.500h136M705 275.500h136M706 293.500h272M705 329.500h821"/>
        <g class="bus">
          <path d="M1869 250.500H842.500v3M842.500 260v3.500H1869M842.500 254v7"/>
          <path d="M1869 268.500H842.500v3M842.500 278v3.500H1869M842.500 272v7"/>
          <path d="M1869 322.500H1527.500v3M1527.500 332v3.500H1869M1527.500 326v7"/>
          <path d="M705 358.500h1164M705 371.500h1164M841.500 359v13M978.500 359v13M1115.500 359v13M1252.500 359v13M1389.500 359v13M1526.500 359v13M1663.500 359v13M1800.500 359v13"/>
          <path class="knot" d="M841.500 359v3M841.500 368v3M978.500 359v3M978.500 368v3M1115.500 359v3M1115.500 368v3M1252.500 359v3M1252.500 368v3M1389.500 359v3M1389.500 368v3M1526.500 359v3M1526.500 368v3M1663.500 359v3M1663.500 368v3M1800.500 359v3M1800.500 368v3"/>
        </g>
        <g class="val">
          <text x="846" y="262">0000000a</text><text x="846" y="280">0000000c</text><text x="1531" y="334">0000000c</text>
          <text x="710" y="370">IDLE</text><text x="846" y="370">SETUP</text><text x="983" y="370">ACCESS</text><text x="1120" y="370">TRANSFER</text><text x="1257" y="370">SETUP</text><text x="1394" y="370">ACCESS</text><text x="1531" y="370">TRANSFER</text><text x="1668" y="370">SETUP</text><text x="1805" y="370">ACCESS</text>
        </g>
      </svg>
      <div class="scroll"><div class="corner"></div><div class="trough"><span class="sup"><i></i></span></div></div>
    </div>
  </section>
</main>

<svg class="notes" viewBox="0 422 1918 95">
  <path class="wr" d="M844.700 432C846 444 852 456 858 460.500 864 462 872 460 877 457 886 450 898 448 910 444L932 439C940 436 968 438 975 439 985 441 987 446 993.500 451 1000 445 1000 441 1020 440.500 1050 439 1100 440 1124 440.500 1134 441 1138 444 1150 444.500 1165 446 1190 446 1202 445L1214 440C1226 437 1230 434 1238 427"/>
  <path class="rd" d="M1255 431C1264 430 1270 432 1276 436 1286 444 1292 447 1302 447 1320 447 1340 447 1355 446 1385 443 1405 438 1437 436.500 1450 436 1475 436 1488 437 1502 440 1506 447 1518.600 454 1526 446 1528 444 1545 442.500 1560 441 1565 439 1578 438.700L1641 438.700C1655 440 1665 441 1676 440 1678 438 1678 435 1678.500 431"/>
  <g class="wt"><text transform="translate(984 500) rotate(-3) scale(.96 1)" font-size="34">W</text><text transform="translate(1020 500) rotate(3) scale(.9 1)" font-size="35">R</text><text transform="translate(1046 497)" font-size="34">I</text><text transform="translate(1060 493) rotate(-3) scale(1.1 1)" font-size="31">T</text><text transform="translate(1086 490) rotate(-2) scale(.8 1)" font-size="32">E</text></g>
  <g class="rt"><text transform="translate(1427 513) rotate(-2) scale(.8 1)" font-size="46">R</text><text transform="translate(1462 506) rotate(-8) scale(.85 1)" font-size="41">E</text><text transform="translate(1493 499) rotate(-3) scale(1.2 1)" font-size="37">A</text><text transform="translate(1531 492) rotate(-8)" font-size="33">D</text></g>
</svg>
</body>
</html>
```
FILE: styles.css
```css
* { box-sizing: border-box; }
body { margin: 0; width: 1918px; height: 517px; overflow: hidden; background: #fefefe; font: 12.4px/17px "Liberation Sans", Arial, sans-serif; color: #000; }
i { font-style: normal; }
svg { display: block; flex: none; }
.defs { position: absolute; }

.titlebar { height: 38px; display: grid; grid-template-columns: 1fr auto 1fr; align-items: center; background: #f3f3f3; border-top: 1px solid #666; border-bottom: 1px solid #8c8c8c; }
.titlebar h1 { grid-column: 2; margin: 0; padding-left: 2px; font: bold 14px/20px "Noto Sans", sans-serif; color: #2e3436; }
.winbtns { width: 78px; height: 12px; justify-self: end; margin-right: 10px; }

.menu { height: 28px; display: flex; align-items: center; gap: 12px; padding-left: 6px; border-bottom: 1px solid #999; }
.menu u { text-decoration-thickness: 1px; text-underline-offset: 2px; }

.toolrow { height: 32px; display: flex; gap: 2px; padding-left: 1px; }
.group { display: flex; align-items: center; flex: none; height: 32px; border: 1px solid #e2e2e2; border-right-color: #999; border-bottom-color: #999; }
.first .group { padding-bottom: 2px; }
.group::before { content: ""; width: 3px; height: 28px; margin-left: 2px; flex: none; border-left: 1px solid #ddd; border-right: 1px solid #999; }
.ic { width: 16px; height: 16px; margin: 0 4px; }
.ic.b { width: 18px; height: 18px; margin: 0 3px; }
.dd { flex: none; width: 9px; height: 3px; margin-top: 4px; }
.dd::before { content: ""; display: block; width: 5px; height: 3px; background: #000; clip-path: polygon(0 0, 100% 0, 50% 100%); }
.dd.off::before { background: #777; }
.sep { width: 13px; height: 15px; flex: none; padding-left: 6px; }
.sep::before { content: ""; display: block; width: 1px; height: 15px; background: repeating-linear-gradient(#000 0 1px, #fff 1px 2px); }
.field { flex: none; height: 19px; border: 1px solid #e0e0e0; border-top-color: #888; border-left-color: #888; background: #fff; font: 11.7px/17px "Liberation Mono", monospace; }
.combo { background: #d9d9d9; padding-left: 1px; }
.arrow { flex: none; width: 19px; height: 19px; display: flex; align-items: center; justify-content: center; border: 1px solid #ddd; border-right-color: #888; border-bottom-color: #888; }
.arrow i { width: 13px; height: 7px; background: #000; clip-path: polygon(0 0, 100% 0, 50% 100%); }
.arrow.off i { width: 11px; height: 6px; background: repeating-linear-gradient(45deg, #000 0 1px, #fff 1px 2px); }

.g-std { width: 373px; } .g-std::before { margin-right: 3px; }
.g-help { width: 155px; } .g-help label { margin: -2px 5px 0 9px; } .g-help .field { width: 75px; margin-right: 4px; }
.g-comp { width: 137px; } .g-comp::before { margin-right: 4px; }
.g-sim { width: 494px; } .g-sim::before { margin-right: 3px; }
.time { width: 61px; margin: 0 2px 0 3px; text-align: right; padding-right: 2px; }
.spin { width: 12px; height: 19px; margin-right: 4px; }
.g-step { width: 191px; } .g-step::before { margin-right: 4px; }
.g-layout { width: 212px; } .g-layout label { margin: -4px 5px 0 8px; } .g-layout .combo { width: 122px; margin-right: 3px; }
.g-cols { width: 345px; } .g-cols label { margin: -4px 5px 0 7px; color: #8a8a8a; } .g-cols .combo { width: 214px; margin-right: 2px; color: #8a8a8a; }
.h-flag { width: 161px; } .h-flag::before { margin-right: 4px; }
.h-x { width: 112px; } .h-x::before { margin-right: 4px; }
.h-mode { width: 173px; } .h-mode::before { margin-right: 4px; }
.h-cur { width: 208px; } .h-cur::before { margin-right: 4px; }
.h-search { width: 386px; } .h-search::before { margin-right: 4px; }
.h-search label { color: #8a8a8a; margin: 0 4px 0 6px; } .h-search .combo { width: 116px; margin-right: 2px; }
.h-zoom { width: 160px; } .h-zoom::before { margin-right: 4px; }
.h-wave { width: 195px; } .h-wave::before { margin-right: 4px; }

.work { height: 292px; display: flex; padding: 1px 2px 0 2px; border-top: 1px solid #ccc; border-bottom: 1px solid #ccc; background: #d9d9d9; }
.ptitle { display: flex; align-items: center; flex: none; }
.pic { width: 16px; height: 16px; }
.pname { flex: none; white-space: nowrap; font-size: 12.4px; }
.groove { flex: none; height: 8px; border-top: 1px solid #999; border-bottom: 1px solid #999; }
.groove::before { content: ""; display: block; height: 6px; border-top: 1px solid #eee; border-bottom: 1px solid #eee; }
.dots { flex: none; width: 18px; height: 8px; background: radial-gradient(circle, #000 .7px, transparent .9px) 0 0 / 3px 3px; margin: 0 3px 0 2px; }
.pb { width: 13px; height: 15px; border: 1px solid #ddd; border-right-color: #888; border-bottom-color: #888; background: #fff; }

.sim { width: 386px; flex: none; display: flex; flex-direction: column; background: #fff; border: 1px solid #999; border-bottom: 0; overflow: hidden; }
.sim .ptitle { height: 19px; padding-left: 0; border-bottom: 1px solid #999; }
.sim .pname { width: 74px; margin-left: 4px; }
.sim .groove { width: 104px; }
.sim .groove + .pb { margin-left: 6px; }
.sim .pb { margin-right: 5px; }
.cols { height: 19px; display: flex; flex: none; }
.cols span { flex: none; border: 1px solid #ddd; border-right-color: #999; border-bottom-color: #999; line-height: 17px; white-space: nowrap; padding-left: 1px; }
.cols .sort { width: 13px; display: flex; align-items: center; justify-content: center; margin-left: 1px; padding: 0; }
.sort i { width: 7px; height: 8px; background: #555; clip-path: polygon(0 0, 100% 0, 50% 100%); }
.cols span:nth-child(2) { width: 158px; }
.cols span:nth-child(3) { width: 144px; }
.cols span:nth-child(4) { flex: 1; border-right: 0; }
.tree { padding-top: 2px; }
.row { display: flex; height: 17px; line-height: 17px; white-space: nowrap; }
.row > span { width: 144px; flex: none; }
.row > span:last-child { width: 64px; overflow: hidden; }
.sel { background: linear-gradient(#e0e0e0, #e0e0e0) 0 0 / 100% 16px no-repeat; }
.inst { width: 174px; flex: none; display: flex; align-items: center; padding-left: 5px; }
.kid .inst { padding-left: 23px; }
.leaf .inst { padding-left: 28px; }
.ex { width: 11px; height: 11px; flex: none; border: 1px solid #889; border-radius: 1px; background: linear-gradient(#000, #000) center / 5px 1px no-repeat, linear-gradient(#000, #000) center / 1px 5px no-repeat, linear-gradient(#fff, #ccd); }
.ex.minus { background: linear-gradient(#000, #000) center / 5px 1px no-repeat, linear-gradient(#fff, #ccd); }
.ln { flex: none; width: 6px; height: 1px; background: repeating-linear-gradient(90deg, #888 0 1px, transparent 1px 2px); }
.leaf .ln { width: 12px; align-self: stretch; height: auto; background: repeating-linear-gradient(90deg, #888 0 1px, transparent 1px 2px) 0 8px / 12px 1px no-repeat, repeating-linear-gradient(#888 0 1px, transparent 1px 2px) 0 0 / 1px 17px no-repeat; }
.leaf.last .ln { background-size: 12px 1px, 1px 9px; }
.ti { width: 12px; height: 12px; margin-right: 1px; }
.ti.ball { width: 13px; height: 13px; margin: 0 1px 0 -1px; }
.inst span { margin-left: 6px; }
.inst .far { margin-left: 8px; }
.capa { padding-left: 20px; }
.capa span { margin-left: 5px; }

.sash { width: 7px; flex: none; background: #d9d9d9; }
.wavewin { width: 1521px; flex: none; border: 1px solid #999; border-bottom: 0; border-left-color: #888; background: #fff; }
.wavewin .ptitle { height: 18px; background: #6372b8; color: #fff; padding-left: 1px; }
.wavewin .pname { width: 86px; margin-left: 4px; }
.wavewin .groove { width: 667px; height: 8px; border-top-color: #a9b3fa; border-bottom-color: #39447a; }
.wavewin .groove::before { height: 6px; border: 0; background: linear-gradient(#6372b8 1px, #39447a 1px 2px, #6372b8 2px 4px, #a9b3fa 4px 5px, #6372b8 5px); }
.wavewin .dots { background-image: radial-gradient(circle, #fff .7px, transparent .9px); }
.wavewin .groove + .pb { margin-left: 4px; }
.wavewin .pb { margin-right: 4px; width: 14px; }
.wavewin .pb:last-child { margin-right: 0; }
.panes { height: 271px; display: flex; padding-left: 2px; border-top: 1px solid #999; margin-top: 1px; }
.names { width: 200px; flex: none; border-right: 1px solid #ccc; display: flex; flex-direction: column; color: #fff; background: #808080; }
.nhead { height: 19px; flex: none; padding-left: 8px; }
.shp { display: flex; align-items: center; width: 31px; height: 19px; padding: 2px 0 0 3px; border: 1px solid #eee; border-bottom: 0; }
.shp .dd { margin: 10px 0 0 4px; }
.nbody { flex: 1; border-top: 2px solid #fff; border-left: 8px solid #fff; padding-top: 3px; }
.sig { height: 18px; line-height: 18px; display: flex; align-items: center; padding-left: 20px; color: #f2f2f2; letter-spacing: -.1px; white-space: nowrap; }
.sig.bus { padding-left: 5px; }
.sig .ln { width: 4px; background: repeating-linear-gradient(90deg, #ddd 0 1px, transparent 1px 2px); }
.di { width: 15px; height: 15px; margin-right: 5px; }
.ins { width: 187px; height: 8px; margin: -5px 0 0 2px; }
.msgs { width: 104px; flex: none; border-left: 2px solid #fff; border-right: 3px solid #fff; background: #808080; color: #f2f2f2; }
.mhead { height: 19px; border: 1px solid #fff; text-align: right; padding-right: 2px; line-height: 18px; }
.mbody { border-top: 2px solid #fff; padding: 3px 3px 0 1px; line-height: 18px; }
.mbody div { height: 18px; white-space: nowrap; }
.mbody hr { height: 1px; margin: -1px 0 0; border: 0; background: #000; }
.canvas { width: 1198px; height: 269px; shape-rendering: crispEdges; }
.grid { stroke: #808080; }
.hi path { fill: none; stroke: #32ff14; }
.unk { stroke: #f00000; }
.bus path { fill: none; stroke: #b0ffa8; }
.bus .knot { stroke-width: 3px; }
.val { fill: #f0f0f0; font: 12.2px "Liberation Sans", Arial, sans-serif; }
.scroll { flex: 1; display: flex; flex-direction: column; border-left: 1px solid #ccc; padding-left: 2px; }
.corner { height: 19px; background: #808080; }
.trough { flex: 1; border: 1px solid #aaa; border-top: 2px solid #eee; border-right: 2px solid #ddd; }
.sup { display: flex; justify-content: center; align-items: center; height: 14px; background: #d0d0d0; border-bottom: 1px solid #999; }
.sup i { width: 7px; height: 11px; background: #fff; clip-path: polygon(50% 0, 100% 100%, 0 100%); }

.notes { width: 1918px; height: 95px; overflow: visible; }
.notes path { fill: none; stroke-width: 6px; stroke-linecap: round; stroke-linejoin: round; }
.notes .wr { stroke: #ffa800; }
.notes .rd { stroke: #0050e6; }
.notes text { font-family: "Liberation Sans", Arial, sans-serif; stroke-width: 2.8px; stroke-linejoin: round; }
.wt { fill: #ffa800; stroke: #ffa800; }
.rt { fill: #0050e6; stroke: #0050e6; }
```
